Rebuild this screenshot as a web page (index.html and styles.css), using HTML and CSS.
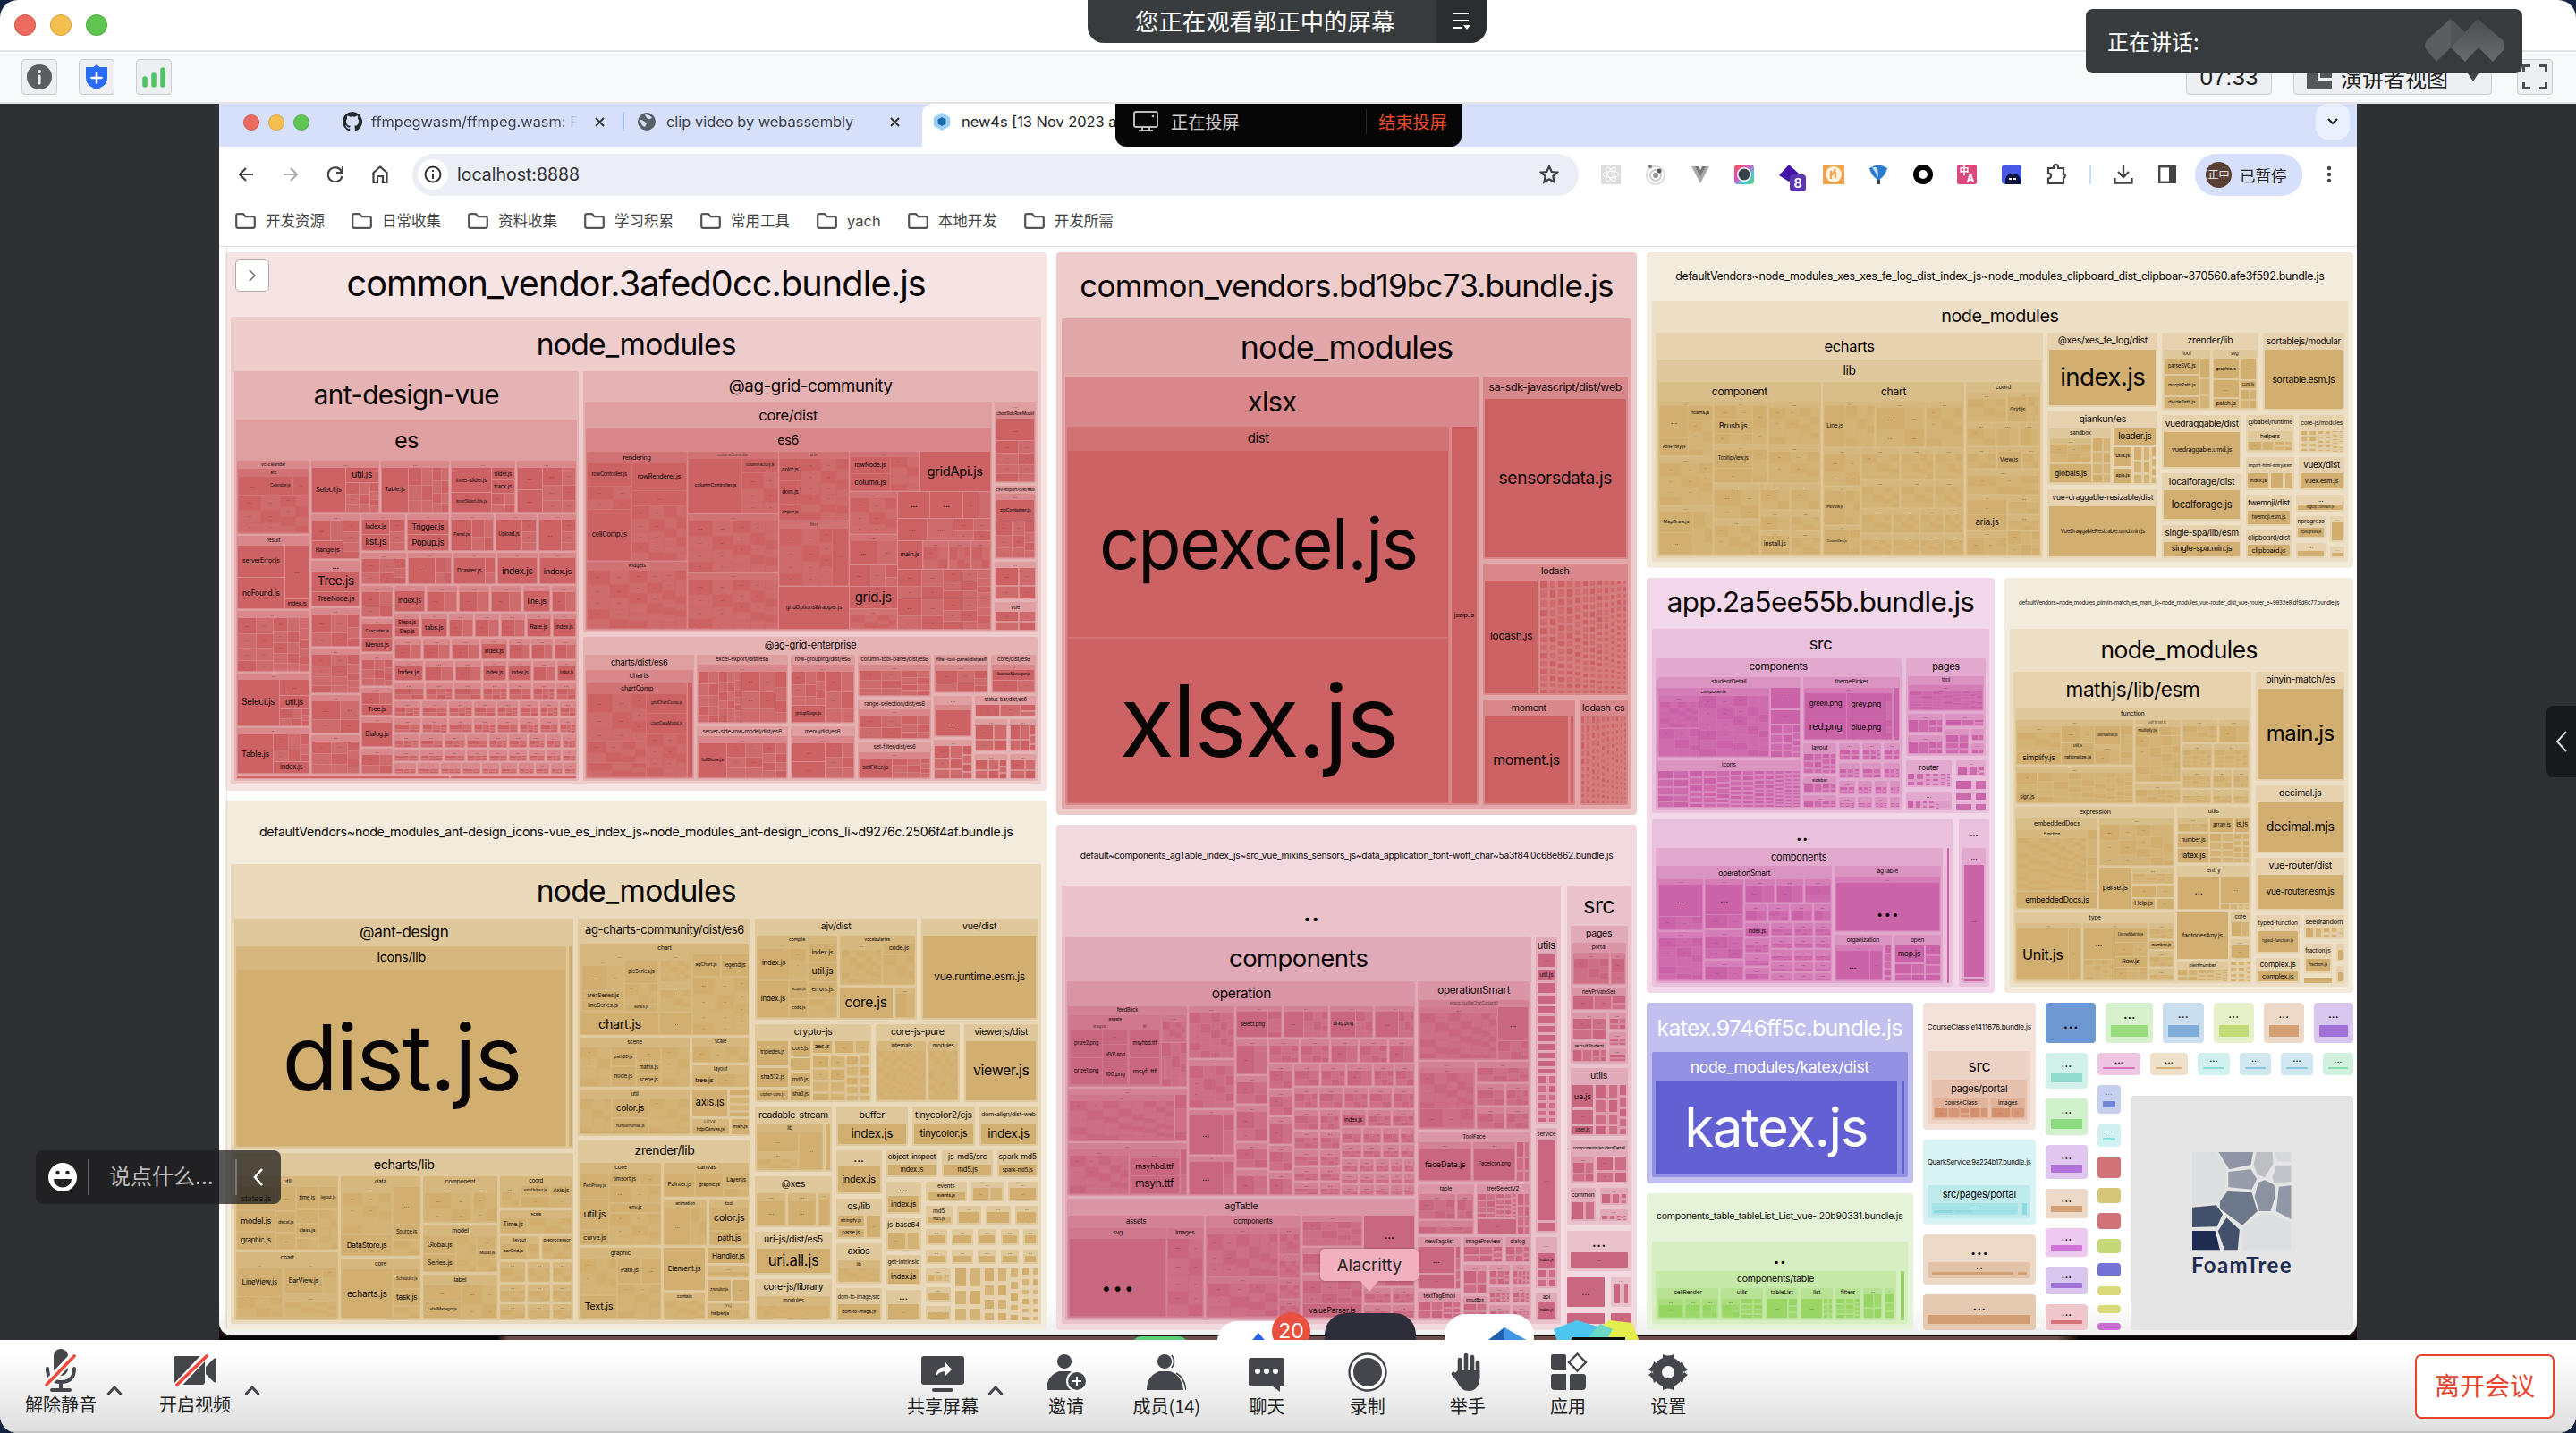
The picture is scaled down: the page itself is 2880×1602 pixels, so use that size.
FILE: index.html
```html
<!DOCTYPE html>
<html lang="zh-CN">
<head>
<meta charset="utf-8">
<title>Meeting</title>
<link rel="stylesheet" href="styles.css">
</head>
<body>
<div class="window">
  <header class="titlebar">
    <div class="lights"><i class="red"></i><i class="amber"></i><i class="green"></i></div>
    <div class="watching"><span>您正在观看郭正中的屏幕</span><b><svg width="24" height="22" viewBox="0 0 24 22"><path d="M2 2h18M2 10h18M2 18h10" stroke="#fff" stroke-width="2.2"/><path d="M14 15h8l-4 5z" fill="#fff"/></svg></b></div>
  </header>
  <div class="infobar">
    <div class="group">
      <span class="btn"><svg width="28" height="28" viewBox="0 0 28 28"><circle cx="14" cy="14" r="14" fill="#5c5d61"/><circle cx="14" cy="8" r="2.1" fill="#f0f0f3"/><path d="M14 13v8" stroke="#f0f0f3" stroke-width="3.2" stroke-linecap="round"/></svg></span>
      <span class="btn"><svg width="26" height="28" viewBox="0 0 26 28"><path d="M13 0l3.500 3H25v12c0 7-6 11-12 13C7 26 1 22 1 15V3h8.500z" fill="#2b6cf6"/><path d="M13 9.500v11M7.500 15h11" stroke="#fff" stroke-width="2.600" stroke-linecap="round"/></svg></span>
      <span class="btn"><svg width="28" height="24" viewBox="0 0 28 24"><path d="M4 14v7M14 10v11M24 4v17" stroke="#4fc465" stroke-width="5.500" stroke-linecap="round"/></svg></span>
    </div>
    <div class="group">
      <span class="btn time">07:33</span>
      <span class="btn view"><svg width="28" height="28" viewBox="0 0 28 28"><path d="M2 0h10v18h16v8q0 2-2 2H2q-2 0-2-2V2q0-2 2-2z" fill="#55565a"/><path d="M15 0h11q2 0 2 2v13H15z" fill="#55565a"/></svg>演讲者视图<svg class="tri" width="12" height="9"><path d="M0 0h12L6 9z" fill="#444"/></svg></span>
      <span class="btn"><svg width="28" height="28" viewBox="0 0 28 28"><path d="M1.500 8V1.500H9M19 1.500h7.500V8M26.500 20v6.500H19M9 26.500H1.500V20" fill="none" stroke="#4c4d51" stroke-width="3"/></svg></span>
    </div>
  </div>
  <main class="stage">
    <section class="screen">
      <div class="tabs">
        <div class="lights small"><i class="red"></i><i class="amber"></i><i class="green"></i></div>
        <div class="tab t1"><svg width="22" height="22" viewBox="0 0 16 16"><path fill="#23272e" d="M8 0a8 8 0 0 0-2.530 15.590c.4.070.550-.170.550-.380v-1.490c-2.010.370-2.530-.490-2.690-.940-.090-.230-.480-.940-.820-1.130-.280-.150-.680-.520-.010-.530.630-.010 1.080.580 1.230.820.720 1.210 1.870.870 2.330.660.070-.520.280-.870.510-1.070-1.780-.200-3.640-.890-3.640-3.950 0-.870.310-1.590.820-2.150-.080-.200-.360-1.020.080-2.120 0 0 .670-.210 2.200.820a7.600 7.600 0 0 1 4 0c1.530-1.040 2.200-.820 2.200-.820.440 1.100.160 1.920.080 2.120.510.560.820 1.270.820 2.150 0 3.070-1.870 3.750-3.650 3.950.290.250.540.730.540 1.480v2.200c0 .210.150.460.550.380A8 8 0 0 0 8 0z"/></svg><span>ffmpegwasm/ffmpeg.wasm: F</span><svg class="x" width="11" height="11" viewBox="0 0 11 11"><path d="M1 1l9 9M10 1l-9 9" stroke="#333" stroke-width="2"/></svg></div>
        <div class="tab t2"><svg width="20" height="20" viewBox="0 0 20 20"><circle cx="10" cy="10" r="10" fill="#5a6067"/><path d="M3 8c3 0 4 2 6 3s0 3-1 5c-3-1-5-4-5-8zM8 2c4 0 6 1 8 4-2 0-2 2-4 1S9 5 8 2z" fill="#d6e0fb"/></svg><span>clip video by webassembly</span><svg class="x" width="11" height="11" viewBox="0 0 11 11"><path d="M1 1l9 9M10 1l-9 9" stroke="#333" stroke-width="2"/></svg></div>
        <div class="tab t3"><svg width="18" height="20" viewBox="0 0 18 20"><path d="M9 0l9 5v10l-9 5-9-5V5z" fill="#9fd0f5"/><path d="M9 5l4.500 2.500v5L9 15l-4.500-2.500v-5z" fill="#1c6bb0"/></svg><span>new4s [13 Nov 2023 at</span></div>
        <div class="down"><svg width="12" height="8" viewBox="0 0 12 8"><path d="M1 1l5 5 5-5" fill="none" stroke="#222" stroke-width="2.200"/></svg></div>
      </div>
      <div class="casting"><svg width="28" height="24" viewBox="0 0 28 24"><rect x="1" y="1" width="26" height="17" rx="2" fill="none" stroke="#bbb" stroke-width="2"/><path d="M10 18v3M18 18v3M6 22h16" stroke="#bbb" stroke-width="2"/><circle cx="22" cy="6" r="1.300" fill="#bbb"/></svg><span>正在投屏</span><em>结束投屏</em></div>
      <div class="navbar">
        <svg width="18" height="16" viewBox="0 0 18 16"><path d="M17 8H2M9 1L2 8l7 7" fill="none" stroke="#444" stroke-width="2.200"/></svg>
        <svg width="18" height="16" viewBox="0 0 18 16"><path d="M1 8h15M9 1l7 7-7 7" fill="none" stroke="#aaa" stroke-width="2.200"/></svg>
        <svg width="18" height="18" viewBox="0 0 18 18"><path d="M16 6A8 8 0 1 0 16.500 11M17 0v7h-7" fill="none" stroke="#444" stroke-width="2.200"/></svg>
        <svg width="18" height="20" viewBox="0 0 18 20"><path d="M1.500 8L9 1.500 16.500 8v11H12v-7H6v7H1.500z" fill="none" stroke="#444" stroke-width="2.200"/></svg>
        <div class="url"><i><svg width="20" height="20" viewBox="0 0 20 20"><circle cx="10" cy="10" r="8.500" fill="none" stroke="#333" stroke-width="2"/><path d="M10 9v6M10 5v2" stroke="#333" stroke-width="2"/></svg></i><span>localhost:8888</span><svg width="22" height="22" viewBox="0 0 22 22"><path d="M11 2l2.700 6 6.300.700-4.700 4.300 1.300 6.500L11 16.200l-5.600 3.300 1.300-6.500L2 8.700 8.300 8z" fill="none" stroke="#3c4043" stroke-width="2.200"/></svg></div>
        <div class="ext">
          <svg viewBox="0 0 24 24"><rect x="1" y="1" width="22" height="22" rx="1" fill="#ddd"/><g fill="none" stroke="#fff"><ellipse cx="12" cy="12" rx="9" ry="3.500"/><ellipse cx="12" cy="12" rx="9" ry="3.500" transform="rotate(60 12 12)"/><ellipse cx="12" cy="12" rx="9" ry="3.500" transform="rotate(120 12 12)"/></g></svg>
          <svg viewBox="0 0 24 24"><circle cx="12" cy="13" r="10" fill="none" stroke="#ddd" stroke-width="2"/><circle cx="12" cy="13" r="6" fill="none" stroke="#ccc" stroke-width="2"/><circle cx="12" cy="13" r="3" fill="#999"/><circle cx="6" cy="3" r="2" fill="#777"/><circle cx="16" cy="8" r="2.500" fill="#555"/></svg>
          <svg viewBox="0 0 24 24"><path d="M2 3h6l4 8 4-8h6L12 22z" fill="#aaa"/><path d="M6 3h4l2 4 2-4h4l-6 11z" fill="#777"/></svg>
          <svg viewBox="0 0 24 24"><defs><linearGradient id="rb" x2="1" y2="1"><stop stop-color="#f2574a"/><stop offset=".4" stop-color="#e04fc0"/><stop offset=".7" stop-color="#45c9e8"/><stop offset="1" stop-color="#66cf5f"/></linearGradient></defs><rect x="1" y="1" width="22" height="22" rx="4" fill="url(#rb)"/><circle cx="12" cy="12" r="8" fill="#fff"/><circle cx="12" cy="12" r="6.500" fill="#35404c"/></svg>
          <svg viewBox="0 0 24 24" overflow="visible"><path d="M12 1l11 10-11 9L1 13z" fill="#4213a8"/><rect x="13" y="12" width="18" height="19" rx="4" fill="#5b36b0"/><text x="22" y="26.500" font-size="14" font-weight="700" fill="#fff" text-anchor="middle">8</text></svg>
          <svg viewBox="0 0 24 24"><rect x="0" y="1" width="24" height="22" fill="#f0a34d"/><circle cx="12" cy="12" r="9" fill="#fff3df"/><path d="M9 8v9M14 6l-4 7M14 9v7" stroke="#f0a34d" stroke-width="2.200" fill="none"/></svg>
          <svg viewBox="0 0 24 24"><path d="M2 5q10-7 20 0-2 8-8 12v6h-4v-6Q4 13 2 5z" fill="#2a7bd0"/><path d="M5 4l6 0 1 11z" fill="#bfe3fb"/><path d="M10 18h4v5h-4z" fill="#444"/></svg>
          <svg viewBox="0 0 24 24"><circle cx="12" cy="12" r="8" fill="none" stroke="#000" stroke-width="6"/></svg>
          <svg viewBox="0 0 24 24"><rect x="1" y="1" width="22" height="22" rx="2" fill="#d9497e"/><text x="9" y="12" font-size="11" font-weight="700" fill="#fff" text-anchor="middle">中</text><text x="16" y="21" font-size="12" font-weight="700" fill="#fff" text-anchor="middle">A</text></svg>
          <svg viewBox="0 0 24 24"><rect x="1" y="1" width="22" height="22" rx="4" fill="#4757e6"/><path d="M5 23V18q1-7 8-7 8 0 9 7v5z" fill="#0b1440"/><path d="M9 17h3M14 17h3" stroke="#fff" stroke-width="2"/></svg>
          <svg viewBox="0 0 24 24"><path d="M3 5h6V3.500a2.500 2.500 0 0 1 5 0V5h6v6a2.600 2.600 0 0 1 0 5v6H3v-5.500a3 3 0 0 0 0-6z" fill="none" stroke="#444" stroke-width="2.200"/></svg>
        </div>
        <u></u>
        <svg class="dl" width="22" height="22" viewBox="0 0 22 22"><path d="M11 0v13M5 8l6 6 6-6M1.500 15v5.500h19V15" fill="none" stroke="#444" stroke-width="2.300"/></svg>
        <svg class="sp" width="20" height="20" viewBox="0 0 20 20"><rect x="1.200" y="1.200" width="17.600" height="17.600" fill="none" stroke="#444" stroke-width="2.400"/><path d="M12 1h7v18h-7z" fill="#444"/></svg>
        <div class="profile"><i>正中</i>已暂停</div>
        <svg width="6" height="20" viewBox="0 0 6 20"><g fill="#444"><circle cx="3" cy="3" r="2.200"/><circle cx="3" cy="10" r="2.200"/><circle cx="3" cy="17" r="2.200"/></g></svg>
      </div>
      <div class="bookmarks" id="bookmarks"></div>
      <div class="page"><div class="toggle"><svg width="10" height="14" viewBox="0 0 10 14"><path d="M2 1l6 6-6 6" fill="none" stroke="#777" stroke-width="1.600"/></svg></div><div class="treemap" id="treemap"></div></div>
      <div class="tip">Alacritty</div>
      <div class="dock">
        <i class="d1"></i><i class="d2"><svg width="30" height="14" viewBox="0 0 30 14"><path d="M15 0l12 14H3z" fill="#2b62ea"/></svg></i><i class="d3"></i><i class="d4"><svg width="56" height="22" viewBox="0 0 56 22"><path d="M0 22L28 0 56 16v6z" fill="#4495e8"/><path d="M0 22L28 0v22z" fill="#2161ad"/></svg></i><i class="d5"><svg width="96" height="24" viewBox="0 0 96 24"><path d="M0 10L26 0 52 8v16H4z" fill="#4cc6ec"/><path d="M42 16L62 0 88 3l8 21H40z" fill="#e4ee4e"/><path d="M52 4l14 6-8 14H34z" fill="#6ad9c8"/><path d="M20 19h60v5H20z" fill="#081010"/></svg></i>
        <b>20</b>
      </div>
    </section>
    <div class="chat"><svg width="32" height="32" viewBox="0 0 32 32"><circle cx="16" cy="16" r="16" fill="#fff"/><circle cx="10.500" cy="11" r="2.300" fill="#222"/><circle cx="21.500" cy="11" r="2.300" fill="#222"/><path d="M6 18h20a10 9.500 0 0 1-20 0z" fill="#222"/></svg><span>说点什么...</span><svg class="back" width="12" height="20" viewBox="0 0 12 20"><path d="M10 1L2 10l8 9" fill="none" stroke="#fff" stroke-width="2.600"/></svg></div>
    <div class="drawer"><svg width="14" height="24" viewBox="0 0 14 24"><path d="M12 1L2 12l10 11" fill="none" stroke="#ddd" stroke-width="2"/></svg></div>
  </main>
  <footer class="controls">
    <div class="item mic"><svg width="44" height="48" viewBox="0 0 44 48"><rect x="14" y="0" width="16" height="30" rx="8" fill="#44464b"/><path d="M7 22q0 15 15 15t15-15M22 37v8M12 46h20" fill="none" stroke="#44464b" stroke-width="4" stroke-linecap="round"/><path d="M36 8L6 40" stroke="#fff" stroke-width="9"/><path d="M37 8L6 40" stroke="#f0483a" stroke-width="3.600" stroke-linecap="round"/></svg><span>解除静音</span></div>
    <svg class="up" width="18" height="11" viewBox="0 0 18 11"><path d="M1.500 10L9 2l7.500 8" fill="none" stroke="#44464b" stroke-width="3"/></svg>
    <div class="item cam"><svg width="50" height="48" viewBox="0 0 50 48"><rect x="1" y="8" width="35" height="32" rx="3" fill="#44464b"/><path d="M37 20l9-9q3-2 3 1v24q0 3-3 1l-9-9z" fill="#44464b"/><path d="M38 6L4 42" stroke="#fff" stroke-width="8"/><path d="M38 8L5 40" stroke="#f0483a" stroke-width="3.600" stroke-linecap="round"/></svg><span>开启视频</span></div>
    <svg class="up second" width="18" height="11" viewBox="0 0 18 11"><path d="M1.500 10L9 2l7.500 8" fill="none" stroke="#44464b" stroke-width="3"/></svg>
    <div class="item share"><svg width="50" height="44" viewBox="0 0 50 44"><rect x="1" y="2" width="48" height="32" rx="3" fill="#44464b"/><path d="M17 26q1-12 11-12v-5l7 8-7 7v-5q-8 0-11 7z" fill="#fff"/><path d="M15 40h20" stroke="#44464b" stroke-width="4" stroke-linecap="round"/></svg><span>共享屏幕</span></div>
    <svg class="up" width="18" height="11" viewBox="0 0 18 11"><path d="M1.500 10L9 2l7.500 8" fill="none" stroke="#44464b" stroke-width="3"/></svg>
    <nav>
      <div class="item"><svg viewBox="0 0 44 44"><circle cx="20" cy="10" r="8" fill="#44464b"/><path d="M0 42q0-16 14-21h12q12 4 14 21z" fill="#44464b"/><circle cx="34" cy="32" r="12" fill="#fff"/><circle cx="34" cy="32" r="10" fill="#44464b"/><path d="M34 27v10M29 32h10" stroke="#fff" stroke-width="2"/></svg><span>邀请</span></div>
      <div class="item"><svg viewBox="0 0 44 44"><circle cx="20" cy="10" r="8" fill="#44464b"/><path d="M0 42q0-16 14-21h12q13 4 15 21z" fill="#44464b"/><path d="M28 3q5 7 0 14M33 23q9 5 11 19" fill="none" stroke="#44464b" stroke-width="1.600"/></svg><span>成员(14)</span></div>
      <div class="item"><svg viewBox="0 0 44 44"><path d="M5 6h34q3 0 3 3v26q0 3-3 3h-2v6l-8-6H5q-3 0-3-3V9q0-3 3-3z" fill="#44464b"/><g fill="#fff"><circle cx="12" cy="21" r="3"/><circle cx="22" cy="21" r="3"/><circle cx="32" cy="21" r="3"/></g></svg><span>聊天</span></div>
      <div class="item"><svg viewBox="0 0 44 44"><circle cx="22" cy="22" r="20.500" fill="#fff" stroke="#44464b" stroke-width="2.400"/><circle cx="22" cy="22" r="16" fill="#44464b"/></svg><span>录制</span></div>
      <div class="item"><svg viewBox="0 0 44 44"><path d="M13 8v18M20 3v20M27 5v20M33 11v18M6 24l8 9" stroke="#44464b" stroke-width="4.600" stroke-linecap="round"/><path d="M11 20h24.300v10q-2 13-12 13-9 0-13-10l-5-8z" fill="#44464b"/></svg><span>举手</span></div>
      <div class="item"><svg viewBox="0 0 44 44"><g fill="#44464b"><path d="M5 2h13q2 0 2 2v16H7q-4 0-4-4V4q0-2 2-2zM5 24h15v18H7q-4 0-4-4V26q0-2 2-2zM26 24h13q3 0 3 3v11q0 4-4 4H24V26q0-2 2-2z"/></g><path d="M32.500 1.500L42 11l-9.500 9.500L23 11z" fill="none" stroke="#44464b" stroke-width="2.400"/></svg><span>应用</span></div>
      <div class="item"><svg viewBox="0 0 44 44"><circle cx="22" cy="22" r="12" fill="none" stroke="#44464b" stroke-width="10"/><path d="M16 6V2q6 3 12 0v4M16 38v4q6-3 12 0v-4M34 13l4-3q1 6 6 9l-4 3M10 31l-4 3q-1-6-6-9l4-3M34 31l4 3q1-6 6-9l-4-3M10 13l-4-3q-1 6-6 9l4 3" fill="#44464b"/></svg><span>设置</span></div>
    </nav>
    <button class="leave">离开会议</button>
  </footer>
  <div class="talking"><span>正在讲话:</span><svg width="90" height="48" viewBox="0 0 90 48"><defs><linearGradient id="lg" x2="0" y2="1"><stop stop-color="#4a4c50"/><stop offset="1" stop-color="#6a6b6e"/></linearGradient></defs><path d="M30 0L3 24q-4 6 0 11l11 13 16-16z" fill="#5b5d60"/><path d="M30 0l16 15-16 17z" fill="#515356"/><path d="M60 0L30 32l16 16 15-16 16 16 11-12q4-6 0-12z" fill="url(#lg)"/></svg></div>
</div>
<script src="treemap.js"></script>
</body>
</html>
```

FILE: styles.css
```css
* { box-sizing: border-box; }
html, body { margin: 0; height: 100%; background: #14233f; overflow: hidden; }
body { font-family: Inter, "Noto Sans CJK SC", sans-serif; color: #222; }
i, em { font-style: normal; }
svg { flex: none; display: block; }
.window { position: relative; width: 2880px; height: 1602px; display: flex; flex-direction: column; background: #fff; border-radius: 20px; overflow: hidden; }

.titlebar { height: 58px; border-bottom: 2px solid #e3e3e8; display: flex; align-items: flex-start; }
.lights { display: flex; gap: 16px; padding: 16px 0 0 16px; width: 1216px; }
.lights i { width: 24px; height: 24px; border-radius: 50%; border: 1px solid #0002; }
.red { background: #ec6a5e; } .amber { background: #f4bf4f; } .green { background: #61c554; }
.watching { height: 48px; width: 446px; display: flex; background: #383c3f; border-radius: 0 0 18px 18px; overflow: hidden; color: #fff; font: 26.400px/46px "Noto Sans CJK SC", sans-serif; }
.watching span { flex: 1; padding-left: 53px; white-space: nowrap; }
.watching b { width: 56px; background: #2c2d30; display: flex; align-items: center; justify-content: center; }

.infobar { height: 58px; background: #f8f9fb; border-bottom: 2px solid #e3e3e5; display: flex; align-items: center; justify-content: space-between; padding: 0 26px 0 24px; }
.group { display: flex; gap: 24px; }
.group:last-child { gap: 28px; }
.btn { height: 40px; min-width: 40px; border: 1.500px solid #ccccd1; border-radius: 4px; background: #eeeff2; display: flex; align-items: center; justify-content: center; font-size: 24px; }
.time { width: 96px; font: 26px "Liberation Sans", sans-serif; margin-right: -4px; }
.view { width: 222px; gap: 10px; }
.view .tri { margin-left: 12px; }

.stage { position: relative; height: 1382px; background: #2f3034; padding: 0 245px; }
.screen { position: relative; height: 1382px; width: 2390px; background: linear-gradient(90deg, #080606 13%, #6b4c46 13.500%, #6b4c46 86%, #0a0605 87%) bottom / 100% 4px no-repeat #17100f; overflow: hidden; display: flex; flex-direction: column; }
.tabs { height: 48px; background: #d6e0fb; display: flex; align-items: center; font-size: 16.400px; color: #3c4048; flex: none; }
.lights.small { padding: 0 0 7px 27px; gap: 10px; width: 138px; }
.lights.small i { width: 18px; height: 18px; }
.tab { display: flex; align-items: center; height: 44px; margin-bottom: 8px; white-space: nowrap; overflow: hidden; }
.t1 { width: 315px; padding-right: 20px; border-right: 2px solid #a9c2f5; height: 22px; }
.t1 span { margin-left: 10px; width: 231px; overflow: hidden; -webkit-mask: linear-gradient(90deg, #000 90%, transparent); mask: linear-gradient(90deg, #000 90%, transparent); }
.tab .x { margin-left: auto; }
.t2 { width: 333px; padding: 0 25px 0 15px; }
.t2 span { margin-left: 12px; }
.t3 { width: 330px; height: 48px; margin: 0; padding: 0 0 8px 13px; background: #fff; border-radius: 12px 12px 0 0; color: #222; }
.t3 span { margin-left: 13px; }
.down { margin: 0 8px 8px auto; width: 38px; height: 40px; border-radius: 14px; background: #e9f0fe; display: flex; align-items: center; justify-content: center; }
.casting { position: absolute; left: 1002px; top: 0; width: 387px; height: 48px; background: #060606; border-radius: 0 0 12px 12px; display: flex; align-items: center; color: #ccc; font: 19.200px "Noto Sans CJK SC", sans-serif; padding: 0 16px 9px 20px; }
.casting span { margin-left: 14px; }
.casting em { margin-left: auto; color: #ea4b2c; border-left: 1px solid #2a2a2a; padding-left: 13px; }

.navbar { height: 68px; background: #fff; display: flex; align-items: center; padding: 0 27px 6px 21px; flex: none; }
.navbar > svg { margin-right: 32px; }
.navbar > svg:last-child { margin: 0; }
.url { width: 1304px; height: 47px; margin-left: -5px; border-radius: 24px; background: #eceef6; display: flex; align-items: center; padding: 0 22px 0 6px; font-size: 19.500px; color: #333; }
.url i { width: 34px; height: 34px; border-radius: 50%; background: #fff; display: flex; align-items: center; justify-content: center; }
.url span { flex: 1; padding-left: 10px; }
.ext { display: flex; gap: 25.800px; margin: 0 25px 0 24px; }
.ext svg { width: 24px; height: 24px; }
.navbar u { width: 2px; height: 22px; background: #ccdcfb; margin-right: 25px; }
.navbar .dl { margin-right: 28px; }
.navbar .sp { margin-right: 21px; }
.profile { width: 120px; height: 47px; border-radius: 24px; background: #d6e0fb; display: flex; align-items: center; gap: 9px; padding-left: 12px; font-size: 17.500px; margin-right: 27px; white-space: nowrap; }
.profile i { width: 29px; height: 29px; border-radius: 50%; background: #5a3f35; color: #eee; font-size: 12px; line-height: 29px; text-align: center; }
.bookmarks { height: 44px; background: #fff; border-bottom: 1.500px solid #dde0e2; display: flex; gap: 30px; padding: 0 0 14px 18px; flex: none; font-size: 16.500px; color: #444; }
.bookmarks div { display: flex; align-items: center; gap: 11px; line-height: 20px; }

.page { position: relative; height: 1217px; background: linear-gradient(#fff 97%, #eee); border-radius: 0 0 14px 14px; padding: 6px 4px 6px 7px; flex: none; }
.page::before { content: ""; position: absolute; left: 8px; top: 0; bottom: 8px; width: 1px; background: #ccc8; }
.toggle { position: absolute; z-index: 2; left: 18px; top: 14px; width: 38px; height: 36px; border: 1.500px solid #aaa; border-radius: 5px; background: #fff; display: flex; align-items: center; justify-content: center; }
.treemap { height: 1205px; display: flex; letter-spacing: -.022em; }
.treemap div { min-width: 0; min-height: 0; flex-basis: 0; flex-shrink: 1; }
.row { display: flex; flex-direction: row; gap: inherit; }
.col { display: flex; flex-direction: column; gap: inherit; }
.plot { gap: 11px; flex: 1; }
.cell { display: flex; flex-direction: column; overflow: hidden; border-radius: 2px; background: color-mix(in srgb, var(--hue) var(--mix), #fff); color: #0b0606; }
.treemap .cell > .head { flex: none; display: flex; align-items: center; justify-content: center; white-space: nowrap; overflow: hidden; line-height: 1; }
.body { flex: 1; }
.s0 { --mix: 17%; } .s1 { --mix: 24%; } .s2 { --mix: 31%; } .s3 { --mix: 38%; } .s4 { --mix: 46%; }
.s5 { --mix: 53%; } .s6 { --mix: 59%; } .s7 { --mix: 66%; } .s8 { --mix: 72%; } .s9 { --mix: 79%; } .s10 { --mix: 85%; }
.field { background: color-mix(in srgb, var(--hue) calc(var(--mix) + 8%), #fff); }
.leaf { background: color-mix(in srgb, var(--hue) 95%, #fff); display: flex; align-items: center; justify-content: center; white-space: nowrap; overflow: hidden; line-height: 1; color: #0b0606; border-radius: 1px; }
.leaf.tiny { background: color-mix(in srgb, var(--hue) 90%, #fff); }
.leaf.tiny.alt { background: color-mix(in srgb, var(--hue) 96%, #fff); }
.faint span { opacity: .6; }
.k0 { padding: 0 6px 7px; gap: 7px; } .k1 { padding: 0 4px 4px; gap: 5px; } .k2 { padding: 0 2px 2px; gap: 3px; }
.k3 { padding: 0 1px 1px; gap: 2px; } .k4 { padding: 0 1px 1px; gap: 1px; }
.bundle { border-radius: 4px; }
.light, .light .leaf, .light .cell { color: #fff; }
.foam { margin-top: 12px; background: #e5e5e5; border-radius: 4px; display: flex; flex-direction: column; align-items: center; justify-content: center; padding-top: 2px; }
.foam p { margin: 5px 0 0; font: 700 24px/22px Lato, sans-serif; letter-spacing: 1.400px; color: #1f2c52; }

.tip { position: absolute; left: 1231px; top: 1280px; width: 110px; height: 36px; border-radius: 5px; background: #f0b0bf; font-size: 18.500px; line-height: 36px; text-align: center; box-shadow: 0 0 3px #0005; }
.tip::after { content: ""; position: absolute; left: 45px; top: 36px; border: 10px solid transparent; border-top: 12px solid #f0b0bf; border-bottom: 0; }
.dock i { position: absolute; overflow: hidden; display: flex; justify-content: center; }
.dock .d1 { left: 1021px; top: 1378px; width: 62px; height: 20px; border-radius: 14px; background: #5bd07a; }
.dock .d2 { left: 1116px; top: 1361px; width: 100px; height: 60px; border-radius: 22px; background: #fff; padding-top: 13px; padding-right: 8px; }
.dock .d3 { left: 1236px; top: 1352px; width: 102px; height: 60px; border-radius: 24px; background: #2d2e3a; }
.dock .d4 { left: 1370px; top: 1353px; width: 100px; height: 60px; border-radius: 24px; background: #fff; padding: 15px 0 0 34px; }
.dock .d5 { left: 1492px; top: 1360px; }
.dock b { position: absolute; left: 1177px; top: 1351px; width: 43px; height: 43px; border-radius: 50%; background: #e8503f; color: #fff; font: 23px/43px Inter, sans-serif; text-align: center; }

.chat { position: absolute; left: 40px; top: 1170px; width: 274px; height: 60px; border-radius: 8px; background: rgba(28, 28, 30, .74); display: flex; align-items: center; padding-left: 14px; color: #bbb; font-size: 24px; }
.chat span { margin-left: 12px; padding: 0 0 0 22px; border-left: 2px solid #666; width: 165px; line-height: 40px; white-space: nowrap; }
.chat .back { border-left: 2px solid #777; box-sizing: content-box; padding: 10px 0 10px 18px; }
.drawer { position: absolute; right: 0; top: 673px; width: 33px; height: 80px; border-radius: 8px 0 0 8px; background: #17181a; display: flex; align-items: center; justify-content: center; }

.controls { height: 104px; background: linear-gradient(#fff 15%, #dfdfdf); border-bottom: 2px solid #c4c4c4; display: flex; align-items: flex-start; padding: 0 24px 0 28px; }
.item { display: flex; flex-direction: column; align-items: center; font: 20px/28px "Noto Sans CJK SC", sans-serif; color: #222; white-space: nowrap; height: 92px; padding-top: 10px; width: 80px; }
.item span { margin-top: auto; margin-bottom: 6px; }
.up { margin: 51px 0 0 11px; }
.cam { margin-left: 41px; }
.second { margin-left: 15px; }
.share { margin-left: 723px; padding-top: 16px; }
.share + .up { margin-left: 10px; }
nav { display: flex; margin-left: 14px; }
nav .item { width: 112.200px; padding-top: 14px; }
nav .item span { margin-bottom: 4px; }
nav .item svg { width: 44px; height: 44px; }
.leave { margin: 16px 0 0 auto; width: 156px; height: 72px; border: 2px solid #e8442e; border-radius: 7px; background: #fff; color: #e8442e; font: 28px "Noto Sans CJK SC", sans-serif; padding: 0 0 4px; }
.talking { position: absolute; left: 2332px; top: 10px; width: 488px; height: 72px; border-radius: 8px; background: #383b3e; color: #fff; display: flex; align-items: center; justify-content: space-between; padding: 0 20px 2px 24px; font: 24px "Noto Sans CJK SC", sans-serif; }
```

FILE: treemap.js
```js
/* Outline notation, one level of indentation per level of nesting.
   b w head start step hue label   bundle (start/step choose the tint per depth)
   g w head label                  group, children side by side
   G w head label                  group, children stacked
   r w / c w                       plain row or column
   l w label [@size]               file
   f w cols rows                   field of small files
   m w cols rows                   small unnamed group
   n w rows cols grow a d          grid of small groups
   "|" separates siblings, ">" goes one level down on the same line. */
const OUTLINE = `
r 1
 c 918
  b 599 72 0 2 #c95a5c common_vendor.3afed0cc.bundle.js > g 1 61 node_modules
   g 644 54 ant-design-vue > G 1 46 es
    r 888
     c 136
      g 208 9 vc-calendar > G 1 9 src
       r 50 > l 55 | l 50 Calendar.js | l 28
       f 105 4 3
      g 208 11 result
       c 88 > l 90 serverError.js | l 85 noFound.js
       c 45 > l 150 | l 26 index.js
      g 172 8 > f 1 5 4
      g 150 7
       l 78 Select.js
       c 56 > l 50 | l 40 util.js | f 50 3 2
      g 130 7
       l 66 Table.js
       c 66 > f 80 3 2 | l 30 index.js
     c 494
      r 147
       g 125 8
        l 60 Select.js
        c 60 > l 30 util.js | f 60 3 3
       g 127 8 > l 50 Table.js | f 75 4 3
       g 118 8
        c 70 > l 65 inner-slider.js | l 50 innerSliderUtils.js
        c 40 > l 30 slider.js | l 30 track.js | f 45 2 2
       g 110 8
        c 45 > l 60 | l 60
        f 60 2 3
      r 736
       c 90
        g 130 7
         c 60 > f 60 2 1 | l 50 Range.js
         f 30 1 4
        G 133 12 > l 50 Tree.js | l 35 TreeNode.js
        m 112 3 2 | m 130 3 4 | m 110 2 2 | m 112 3 3
       c 400
        r 104
         g 82 6
          c 52 > l 1 Index.js | l 1 list.js
          f 28 1 3
         G 78 6 > l 1 Trigger.js | l 1 Popup.js
         g 80 6 > l 40 Panel.js | f 40 2 2
         g 78 6 > l 50 Upload.js | f 26 1 3
         g 70 6 > l 40 | f 25 1 3
        r 90
         m 82 3 2
         g 82 6 > l 50 | f 28 2 2
         g 78 6 > l 60 Drawer.js | f 18 1 2
         g 75 6 > l 1 index.js
         g 68 6 > l 1 index.js
        r 531
         c 58
          m 88 2 2
          G 95 6 > l 1 Cascader.js | l 1 Menus.js
          m 90 3 3
          G 80 6 > f 30 2 1 | l 26 Tree.js
          g 85 6 > l 1 Dialog.js
          m 70 2 2
         c 340
          r 75
           g 58 6 > l 1 index.js
           m 58 2 1 | m 58 2 1 | m 58 2 1
           g 50 6 > l 1 line.js
           m 46 2 1
          r 70
           G 46 6 > l 1 Steps.js | l 1 Step.js
           g 46 6 > l 1 tabs.js
           m 44 2 1 | m 44 2 1 | m 44 2 1
           g 44 6 > l 1 Rate.js
           g 42 6 > l 1 index.js
          r 60
           m 46 2 1 | m 46 2 1 | m 46 2 1
           g 44 6 > l 1 index.js
           m 36 2 1 | m 36 2 1 | m 36 2 1
          r 58
           g 46 6 > l 1 Index.js
           m 46 2 1 | m 42 2 1
           g 38 6 > l 1 index.js
           g 38 6 > l 1 index.js
           m 36 2 1
           g 30 6 > l 1 index.js
          n 268 6 7 .5 2 2
    r 7 > l 400 | l 235
   c 851
    g 735 34 @ag-grid-community
     g 758 30 core/dist > g 1 26 es6
      c 188
       g 310 13 rendering
        c 80 > l 60 rowController.js | f 60 2 2 | l 135 cellComp.js
        c 100 > l 75 rowRenderer.js | l 40 | f 150 4 5
       g 190 10 widgets > f 1 6 5
      c 168
       g 175 8 columnController
        l 98 columnController.js
        c 64 > l 38 columnFactory.js | f 115 2 3
       m 165 5 4 | m 158 5 4
      c 130
       g 192 8 utils
        c 40 > l 1 color.js | l 1 dom.js | l .7 object.js
        f 90 3 6
       g 180 8 filter > f 100 3 4 | l 28
       l 118 gridOptionsWrapper.js
      c 262
       r 112
        g 130 6
         c 75 > l 1 rowNode.js | l 1 column.js
         f 52 2 4
        l 130 gridApi.js
       r 388
        c 88
         m 120 3 3 | m 82 2 1 | f 60 3 1 | l 60 grid.js | m 55 4 2
        c 170
         r 75 > l 60 | l 60 | f 50 2 1
         f 60 4 1
         r 80 > l 45 main.js | n 125 1 3 0 2 2
         f 80 5 2 | f 85 5 2
     c 78
      g 230 10 > G 1 9 clientSideRowModel > l 60 | f 110 2 4
      g 208 9 csv-export/dist/es6 > G 1 7 > l 50 zipContainer.js | f 90 3 3
      m 105 2 2
      g 80 11 vue > f 1 2 2
    g 405 20 @ag-grid-enterprise
     g 203 17 charts/dist/es6 > g 1 14 charts
      g 190 13 chartComp
       c 112 > f 140 3 3 | f 60 4 2 | f 40 3 2
       c 76 > l 50 gridChartComp.js | l 50 chartDataModel.js | f 110 3 4
      l 7
     c 170
      g 200 11 excel-export/dist/es6 > g 1 8 > f 75 5 5 | f 80 3 3
      g 150 11 server-side-row-model/dist/es6 > g 1 8 > l 50 fullStore.js | f 105 4 3
     c 120
      g 200 11 row-grouping/dist/es6 > g 1 8
       c 60 > f 90 3 3 | l 45 groupStage.js
       f 52 2 3
      g 150 11 menu/dist/es6 > g 1 8
       c 60 > l 60 | l 50
       f 50 2 3
     c 138
      g 120 11 column-tool-panel/dist/es6 > m 1 4 3
      g 115 11 range-selection/dist/es6 > m 1 4 2
      g 105 11 set-filter/dist/es6 > g 1 7 > l 60 setFilter.js | f 70 3 3
     c 190
      r 110
       g 100 11 filter-tool-panel/dist/es6 > m 1 3 2
       g 82 11 core/dist/es6 > G 1 6 > l 1 licenseManager.js | f 1 2 1
      r 235
       c 70
        g 115 10 > g 1 6 > l 1
        m 110 3 3
       c 112
        g 60 10 status-bar/dist/es6 > f 1 3 1
        n 170 2 2 0 2 2
  b 590 71 1 3 #cfab68 defaultVendors~node_modules_ant-design_icons-vue_es_index_js~node_modules_ant-design_icons_li~d9276c.2506f4af.bundle.js > g 1 61 node_modules
   c 633
    g 650 31 @ant-design
     g 620 26 icons/lib > l 1 dist.js @102
     l 5
    g 472 26 echarts/lib
     c 190
      g 210 12 util
       c 72 > l 70 states.js | l 60 model.js | l 50 graphic.js
       c 35 > l 70 | l 60 decal.js | l 45
       c 38 > l 66 time.js | l 40 | l 40 class.js | f 30 2 1
       c 35 > l 60 layout.js | f 110 2 5
      g 190 12 chart
       G 85 6 > l 85 LineView.js | f 60 3 2
       c 100
        g 95 6 > l 70 BarView.js | f 25 1 3
        m 70 4 3
     c 148
      g 228 12 data
       c 92 > m 135 3 4 | l 60 DataStore.js
       c 48 > l 110 | l 40 Source.js | f 45 2 2
      g 170 12 core
       l 94 echarts.js
       c 48 > l 60 Scheduler.js | l 50 task.js | f 35 2 2
     c 138
      g 133 12 component > m 90 2 2 | m 45 2 2
      g 133 12 model
       c 58 > l 1 Global.js | l 1 Series.js
       f 34 2 5
       c 34 > l 50 | l 30 Model.js | f 50 2 2
      g 125 12 label
       c 70 > l 45 | l 45 LabelManager.js
       f 65 2 2
     c 134
      g 93 11 coord
       m 35 2 2
       c 95
        r 1 > l 50 axisHelper.js | l 35 Axis.js
        f 1 2 1
      g 70 9 scale > l 45 Time.js | f 80 3 2
      r 70
       g 68 9 layout > l 45 barGrid.js | f 20 1 2
       g 52 9 preprocessor > f 80 3 2
      n 170 3 3 0 2 2
   c 322
    G 615 28 ag-charts-community/dist/es6
     g 263 12 chart
      c 147
       g 165 7
        G 80 6 > f 70 2 1 | l 26 areaSeries.js | l 26 lineSeries.js
        c 62 > l 70 pieSeries.js | f 60 3 2 | l 20 series.js
       l 58 chart.js
      c 58 > m 80 4 4 | m 78 3 3 | l 58
      c 105
       r 60 > l 1 agChart.js | l 1 legend.js
       f 155 3 4
     r 140
      g 207 11 scene
       f 55 2 4
       c 45 > l 1 path2D.js | l 1 node.js
       c 45 > l 30 | l 25 matrix.js | l 25 scene.js
       f 50 2 4
      c 108
       g 70 10 scale > f 1 4 1
       g 58 10 layout > l 44 tree.js | f 60 2 1
     r 128
      g 207 11 util
       f 58 3 4
       c 68 > l 52 color.js | l 40 numberFormat.js
       f 75 3 4
      c 108
       r 80 > l 68 axis.js | f 36 1 4
       r 45
        g 70 8 canvas > l 1 hdpiCanvas.js
        l 34 main.js
    G 510 25 zrender/lib
     r 235
      g 153 12 core
       c 52 > l 75 PathProxy.js | l 82 util.js | l 40 curve.js
       c 95
        r 35 > l 50 timsort.js | l 35
        f 50 3 1 | l 24 env.js | f 95 3 3
      c 160
       g 95 12 canvas
        l 55 Painter.js | l 50 graphic.js
        c 45 > l 40 Layer.js | f 20 2 1
       r 125
        g 80 9 animation > l 50 | f 28 2 3
        G 75 9 tool > l 60 color.js | l 35 path.js
     r 200
      g 153 12 graphic
       c 68 > f 100 3 3 | l 62 Text.js
       c 80
        r 70 > l 45 Path.js | l 35
        f 95 3 4
      c 78
       l 122 Element.js
       g 75 9 contain > f 1 4 3
      c 78
       l 45 Handler.js | m 32 1 1
       r 60 > l 50 zrender.js | l 35
       g 45 7 svg > l 45 helper.js | f 30 2 2
   c 527
    r 287
     g 300 19 ajv/dist
      g 150 9 compile
       c 95
        g 1 6 > l 60 index.js | f 34 1 3
        r 1
         l 60 index.js
         c 34 > l 1 scope.js | l 1 code.js
       c 52 > l 1 index.js | l 1 util.js | l .8 errors.js | f 1 2 3
      c 142
       g 143 9 vocabularies
        m 80 6 5
        c 58 > l 30 code.js | f 90 3 3
       r 85 > l 100 core.js | m 38 2 1
     g 217 19 vue/dist > l 1 vue.runtime.esm.js
    r 222
     g 215 19 crypto-js
      c 60 > l 75 tripledes.js | l 60 sha512.js | l 34 cipher-core.js
      c 38 > l 45 core.js | l 36 | l 44 md5.js | l 36 sha3.js
      c 110
       r 35 > l 38 aes.js | f 70 2 1
       f 130 4 4
     g 157 19 core-js-pure
      g 90 11 internals > f 1 9 10
      g 54 11 modules > f 1 6 8
     g 137 19 viewerjs/dist > l 1 viewer.js
    r 605
     c 142
      g 180 19 readable-stream
       g 125 10 lib
        c 75 > l 50 | m 45 4 2
        l 42
       l 8
      g 142 19 @xes
       g 50 9 > l 1
       g 50 9 > l 1
       m 20 1 1
      g 118 19 uri-js/dist/es5 > l 1 uri.all.js
      g 115 19 core-js/library > g 1 11 modules > f 1 14 3
     c 377
      r 110
       g 135 19 buffer > l 1 index.js
       g 117 19 tinycolor2/cjs > l 1 tinycolor.js
       g 110 19 dom-align/dist-web > l 1 index.js
      r 485
       c 85
        g 122 18 > l 1 index.js
        g 112 19 qs/lib
         c 50 > l 1 stringify.js | l .8 parse.js
         l 25
        g 112 19 axios > g 1 9 lib > f 1 5 3
        g 88 18 dom-to-image/src > l 1 dom-to-image.js
       c 282
        r 78
         g 95 16 object-inspect > l 1 index.js
         g 93 16 js-md5/src > l 1 md5.js
         g 75 16 spark-md5 > l 1 spark-md5.js
        r 400
         c 65
          g 90 16 > l 1 index.js
          g 90 16 js-base64 > f 1 2 1
          g 85 16 get-intrinsic > l 1 index.js
          g 85 16 > l 1
         c 210
          r 62
           g 80 12 events > l 1 events.js
           m 62 2 1 | m 58 1 1
          r 58
           g 52 12 md5 > l 1 md5.js
           m 48 1 1 | m 48 1 1 | m 44 1 1
          r 50 > m 1 1 1 | m 1 1 1 | m .9 1 1 | m .8 1 1 | m .7 1 1
          r 45 > m 1 1 1 | m 1 1 1 | m .9 1 1 | m .8 1 1 | m .7 1 1
          r 160
           c 45 > m 1 3 1 | m 1 1 1 | m 1 1 1
           c 150
            f 1 7 3
 c 648
  b 629 74 2 3 #c95a5c common_vendors.bd19bc73.bundle.js > g 1 65 node_modules
   g 1064 56 xlsx
    G 980 27 dist > l 500 cpexcel.js @79 | l 442 xlsx.js @112
    l 64 jszip.js
   c 373
    g 490 25 sa-sdk-javascript/dist/web > l 1 sensorsdata.js
    g 355 19 lodash > l 138 lodash.js | f 222 12 14
    r 283
     g 238 19 moment > l 218 moment.js | l 6
     g 125 19 lodash-es > f 1 10 12
  b 565 68 1 2 #c75f79 default~components_agTable_index_js~src_vue_mixins_sensors_js~data_application_font-woff_char~5a3f84.0c68e862.bundle.js
   g 1283 57 ..
    g 1200 50 components
     c 898
      g 615 28 operation
       c 302
        g 228 10 feedBack
         g 233 9 assets
          g 150 8 images
           c 75 > l 1 prize2.png | l 1 prize1.png
           c 60 > l 30 | l 45 MVP.png | l 45 100.png
          G 80 8 ttf > l 1 msyhbd.ttf | l 1 msyh.ttf
         c 60 > m 70 4 3 | f 110 3 4
        g 150 7
         g 270 7 > f 1 8 5
         f 26 1 4
        g 145 7
         m 155 5 4
         G 130 10 > l 1 msyhbd.ttf | l 1 msyh.ttf
         f 14 1 2
       c 118
        m 145 5 5 | m 135 4 4
        g 125 6 > l 90 | f 28 1 3
        g 108 6 > l 90 | f 28 1 3
       c 455
        r 90
         g 114 6 > l 78 select.png | f 30 1 4
         g 114 6 > l 50 | f 60 3 3
         g 110 6 > l 62 drag.png | f 40 2 3
         g 100 6 > l 60 | f 38 3 3
        r 450
         c 80 > m 100 2 1 | m 78 2 2 | m 100 2 2 | m 70 2 2 | m 70 2 1
         c 372
          r 68 > m 75 3 2 | m 75 3 2 | m 70 2 1 | m 70 3 2 | m 66 2 1
          r 380
           c 60 > m 1 2 2 | m 1 2 2 | m 1.1 2 1 | m 1 2 2 | m .9 2 1
           c 305
            r 64 > m 1 2 2 | m 1 3 2 | m 1 2 1 | m .8 3 2 | m .8 2 2
            r 60 > m 1 3 2 | m 1 2 2 | m 1 3 2 | m 1 2 2 | m .9 3 2
            r 246
             n 113 5 2 0 2 2
             c 185
              r 46
               g 60 5 > l 1 index.js
               m 58 3 2 | m 55 3 2
              n 190 5 4 .3 2 2
      g 345 19 agTable
       g 350 14 assets
        g 250 12 svg > l 1 ... @44
        g 93 12 images > f 1 2 5
       g 244 14 components
        c 188 > m 140 6 3 | m 115 4 3
        n 54 4 1 0 3 3
       c 155
        m 85 4 3 | m 70 3 2
        G 120 7 > f 70 4 2 | l 38 valueParser.js
       c 130 > l 120 | m 90 3 2 | n 90 2 2 0 3 2
     c 288
      G 400 21 operationSmart
       g 185 8 enterpriseWeChatContent2
        g 200 7 > f 1 7 6
        c 76 > l 105 | f 56 3 2
       r 205
        g 145 7 > G 1 6 > f 110 5 4 | f 55 3 1
        c 135
         m 65 4 2
         r 68 > m 1 2 2 | m .8 3 2
         r 68 > m 1 2 2 | m .8 3 2
      g 132 11 ToolFace
       g 135 7 > l 1 faceData.js
       g 107 7 > l 1 FaceIcon.png
       f 30 2 3
      r 135
       G 143 11 table
        r 1 > m 90 3 2 | m 40 2 2
        m .5 4 1
       g 137 11 treeSelectV2
        c 103 > f 60 5 4 | l 35
        f 28 2 4
      r 220
       c 110
        g 140 11 newTagslist
         c 95 > l 70 | l 35
         f 10 1 4
        g 72 11 textTagEmoji > f 1 4 2
       c 172
        r 70
         g 105 11 imagePreview > f 1 3 2
         g 65 11 dialog > f 1 3 2
        r 145
         c 60
          m 75 2 2
          g 60 9 inputBox > f 1 2 2
         n 105 3 2 0 3 2
    c 54
     G 535 20 utils > l 36 | l 32 util.js | l 28 | l 22 | l 21 | l 20 | l 19 | l 18 | l 17 | l 16 | l 15 | l 14 | f 130 2 6
     G 300 14 service > l 220 | l 22
     G 145 18 > l 40 index.js | f 45 2 2
     g 80 11 api > l 1 index.js
   c 166
    G 975 45 src
     G 395 19 pages
      g 125 11 portal > m 90 3 3 | m 36 1 2
      g 65 10 newPrivateSea > f 1 3 1
      r 145
       c 85
        m 75 2 2
        g 55 9 recruitStudent > f 1 4 1
       c 42 > m 1 2 2 | m .8 2 2 | m .8 1 2
     g 195 19 utils
      c 55 > l 65 ua.js | l 38 | l 22 user.js
      f 78 3 4
     g 125 18 components/studentDetail > m 58 2 2 | f 75 2 2
     r 95
      g 68 16 common > f 1 2 1
      n 75 2 1 0 3 1
    g 115 24 > l 1
    r 85 > l 98 | m 52 2 1
    r 30 > l 98 | l 52
 c 790
  b 352 54 1 2 #cfab68 defaultVendors~node_modules_xes_xes_fe_log_dist_index_js~node_modules_clipboard_dist_clipboar~370560.afe3f592.bundle.js > g 1 36 node_modules
   g 830 30 echarts > g 1 25 lib
    g 345 22 component
     c 113
      g 170 5
       c 60 > l 90 | l 50 AxisProxy.js
       c 48 > l 40 roams.js | f 95 2 4
      m 150 3 4
      g 148 6
       c 70 > l 1 MapDraw.js | l 1
       f 40 2 3
     c 225
      r 140
       g 113 5
        c 80 > f 1 2 1 | l 1 Brush.js | f .8 3 1
        f 30 1 2
       m 108 4 4
      r 122
       g 113 5
        c 80 > l 1 TooltipView.js | l .7
        f 30 1 4
       m 108 3 3
      r 230
       c 95 > m 110 2 2 | m 110 4 3
       c 125
        r 80 > m 1 2 2 | m 1 2 2
        r 60 > m 1 2 1 | m 1 3 2
        r 70
         g 60 5 > l 1 install.js
         m 60 3 2
    G 298 22 chart
     r 150
      g 108 5 > l 44 Line.js | f 60 3 4
      m 105 2 2 | m 80 3 4
     r 350
      c 78
       m 120 2 2
       g 120 5 > l 45 PieView.js | f 30 2 4
       g 90 5 > l 55 CustomView.js | f 22 1 4
      n 218 4 3 .4 3 3
    G 158 12 coord
     r 95
      m 85 3 3
      g 70 5 > l 45 Grid.js | f 25 2 3
     r 75 > m 1 2 2 | m .8 2 1 | m .7 2 1
     r 70
      m 60 3 2
      g 50 5 > l 1 View.js
      m 36 2 2
     m 80 3 2
     r 110
      G 85 5 > l 1 | l 1 aria.js
      n 65 2 1 0 2 2
     r 75 > m 85 3 1 | f 65 3 2
   c 235
    g 250 19 @xes/xes_fe_log/dist > l 1 index.js
    g 248 19 qiankun/es
     g 133 11 sandbox
      c 88 > m 75 3 2 | l 58 globals.js
      f 38 2 4
     c 90
      l 55 loader.js
      r 125
       c 38 > l 1 utils.js | l .8 apis.js
       f 48 3 3
    g 230 19 vue-draggable-resizable/dist > l 1 VueDraggableResizable.umd.min.js
   c 390
    r 262
     g 205 19 zrender/lib
      g 98 10 tool
       c 75 > l 50 parseSVG.js | l 65 morphPath.js | l 36 dividePath.js
       f 18 1 3
      g 94 10 svg
       c 56 > l 70 graphic.js | l 60 | l 30 patch.js
       c 34 > l 70 | l 25 core.js | f 60 2 2
     g 174 19 sortablejs/modular > l 1 sortable.esm.js
    r 482
     c 170
      g 185 19 vuedraggable/dist > l 1 vuedraggable.umd.js
      g 160 19 localforage/dist > l 1 localforage.js
      g 112 19 single-spa/lib/esm > l 1 single-spa.min.js
     c 210
      r 130
       g 104 18 @babel/runtime > g 1 12 helpers > f 1 4 1
       g 98 18 core-js/modules > f 1 6 4
      r 112
       g 104 18 import-html-entry/esm > l 48 index.js | f 50 2 1
       g 98 18 vuex/dist > l 1 vuex.esm.js
      r 215
       c 98
        g 105 18 twemoji/dist > l 1 twemoji.esm.js
        g 90 16 clipboard/dist > l 1 clipboard.js
       c 104
        g 58 11 > l 1 regexp.common.js
        r 145
         c 62
          g 75 13 nprogress > l 1 nprogress.js
          g 52 9 > l 1
         c 30 > m 95 1 1 | m 40 1 1
  r 464
   b 389 57 1 2 #c85ba3 app.2a5ee55b.bundle.js > c 1
    g 618 33 src
     g 528 21 components
      c 306
       g 270 12 studentDetail
        g 235 9 components
         c 85 > m 110 5 5 | f 90 3 3
         f 147 5 6
        c 62 > l 75 | l 48 | f 110 3 4
       g 160 12 icons > f 1 12 5
      c 205
       g 210 12 themePicker
        g 190 6
         c 90 > l 1 green.png | l 1 red.png
         c 83 > l 1 grey.png | l 1 blue.png
         f 12 1 6
        l 10
       r 215
        c 70
         g 105 12 layout > f 1 4 3
         g 55 9 sidebar > f 1 4 1
         m 42 4 1
        n 130 4 3 .3 2 2
     c 172
      G 340 20 pages
       g 120 10 tool > g 1 7 > f 1 8 5
       r 140
        c 76 > m 1 4 1 | m 1 4 1
        c 82
         m 45 3 1
         r 85
          m 50 2 3
          c 28 > m 1 2 1 | m 1 2 1
      r 170
       c 100
        g 92 15 router > f 1 6 2
        g 62 10 > f 1 7 1
       c 64 > m 55 3 1 | f 100 2 3
    r 560
     g 640 32 ..
      g 615 20 components
       g 375 15 operationSmart
        c 98
         G 170 6 > l 110 | f 45 3 1
         m 165 3 5
        c 82
         G 165 6 > l 110 | f 45 2 1
         m 95 2 2 | m 68 2 1
        c 185
         r 82 > m 64 2 1 | m 58 2 1 | m 55 1 2
         r 60 > m 1 2 1 | m 1 2 2 | m 1 2 1 | m .8 2 1
         r 205
          c 52
           g 48 5 > l 1 index.js
           m 50 3 2 | m 40 2 2 | m 45 2 1
          n 132 5 3 0 2 2
       c 228
        g 225 12 agTable > g 1 7 > l 1 ... @30
        r 160
         g 120 12 organization
          g 100 6 > l 72 | l 26
          f 12 1 5
         g 98 12 open
          c 60 > l 70 map.js | f 65 2 2
          f 30 1 4
      l 4
     g 66 32 > G 1 19 > l 350 | l 8
   b 389 57 1 2 #cfab68 defaultVendors~node_modules_pinyin-match_es_main_js~node_modules_vue-router_dist_vue-router_e~9932e8.df9d6c77.bundle.js > g 1 48 node_modules
    G 508 41 mathjs/lib/esm
     g 320 13 function
      c 248
       g 152 7
        c 95 > m 85 3 3 | l 40 simplify.js
        c 72 > f 60 2 1 | l 25 util.js | l 50 rationalize.js
        c 55 > l 60 derivative.js | m 60 2 1
        f 24 1 5
       g 122 7
        c 42 > f 60 1 2 | l 25 sign.js
        f 200 8 4
      c 98
       G 210 8 arithmetic
        r 30 > l 52 multiply.js | f 45 2 1
        f 160 4 5
       m 66 5 2
      c 142
       r 78 > m 75 3 3 | m 66 2 1
       r 82 > m 62 4 4 | m 75 4 4
       r 112 > n 62 2 1 0 4 3 | n 78 2 2 0 2 2
     r 345
      g 338 13 expression
       G 173 13 embeddedDocs
        r 235
         g 150 9 function > f 1 8 12
         f 20 1 8
        l 60 embeddedDocs.js
       c 157
        m 160 5 3
        r 135
         l 65 parse.js
         c 86
          m 55 4 3 | f 40 2 1
          r 35 > l 46 Help.js | l 36
      c 155
       g 205 12 utils
        c 65 > m 55 3 1 | l 50 number.js | l 50 latex.js
        c 82
         r 50 > l 48 array.js | l 30 is.js
         f 100 4 4
       g 160 12 entry
        l 90
        c 60 > l 105 | f 18 4 1
     r 232
      g 338 12 type
       g 138 6 > l 112 Unit.js | l 24
       g 138 6
        c 65 > l 100 | f 65 4 4
        c 68 > l 50 DenseMatrix.js | f 50 2 1 | l 35 Row.js | f 45 3 1
       c 52 > m 60 3 2 | l 32 number.js | n 110 2 1 0 3 2
      c 155
       r 142
        l 110 factoriesAny.js
        c 42
         g 75 11 core > f 1 2 1
         m 60 1 1
       r 60
        g 110 9 plain/number > f 1 6 2
        f 42 3 4
    c 188
     g 370 19 pinyin-match/es > l 1 main.js
     g 228 19 decimal.js > l 1 decimal.mjs
     g 180 19 vue-router/dist > l 1 vue-router.esm.js
     r 230
      c 92
       g 130 18 typed-function > l 1 typed-function.js
       g 88 15 complex.js > l 1 complex.js
      c 86
       g 80 14 seedrandom > f 1 5 1
       r 135
        c 62
         g 105 17 fraction.js > l 1 fraction.js
         l 22
        c 18 > m 1 1 1 | m 1 1 1
  r 365
   c 298
    b 201 55 3 4 #5b58d1 katex.9746ff5c.bundle.js > g 1 32 node_modules/katex/dist > l 520 katex.js @60 | l 6
    b 153 54 1 2 #93d35c components_table_tableList_List_vue-.20b90331.bundle.js > g 1 33 ..
     g 510 19 components/table
      g 132 12 cellRender > m 58 1 1 | m 34 1 2 | m 34 2 2
      g 90 12 utils > m 38 2 2 | f 45 2 4
      g 70 12 tableList > l 48 | f 20 1 3
      g 68 12 list > l 48 | f 18 2 4
      g 55 12 filters > f 1 3 4
      m 40 2 2 | m 20 1 3
     l 8
   c 126
    b 141 54 1 2 #d08b66 CourseClass.e1411676.bundle.js > g 1 32 src > g 1 20 pages/portal
     g 115 12 courseClass > f 70 3 1 | f 35 2 1
     g 72 12 images > f 1 2 1
    b 94 51 2 3 #85d8dc QuarkService.9a224b17.bundle.js > g 1 20 src/pages/portal
     g 186 8 > f 1 5 1
     l 10
    b 56 31 3 3 #cf9a6c > g 1 11 > l 180 | l 20
    b 40 23 5 3 #cf9a6c > l 1
   c 344
    r 44 > solo 56 #6593cf | s 52 #93da76 25 | s 45 #77a9d6 25 | s 45 #bfd970 25 | s 44 #d19c6d 25 | s 44 #9c68d6 25
    r 309
     c 47 > s 40 #8ad9cb 23 | s 40 #86d979 23 | s 38 #ad6bd8 22 | s 32 #cf9a6c 19 | s 32 #cf6dd6 19 | s 30 #9a69d4 18 | s 29 #d56a72 18
     c 286
      r 25 > s 48 #d269b4 16 | s 42 #d3ad70 16 | s 36 #83d9d0 16 | s 35 #83c1d7 16 | s 36 #83c1d9 16 | s 34 #85d8a8 16
      r 273
       c 26 > s 32 #6b80d6 18 | s 26 #87dada 16 | x 24 #cb6268 | x 17 #d1c068 | x 17 #cb6268 | x 16 #bfd569 | x 15 #6562d0 | x 10 #d6d66c | x 9 #d6d66c | x 8 #c45bd0
       foam 248
`;

const FOAM = '<svg width="111" height="110" viewBox="1187 570 212 330" preserveAspectRatio="none"><path fill="#dddee0" d="M1187 570h52l22 60-6 92-11 13-57 15zM1296 820l38-42 28 2 36 25v93h-104z"/><path fill="#8f95a5" d="M1243 570h74l-5 42-46 16z"/><path fill="#bdbfc4" d="M1324 570h34l2 38-18 47-16-10-8-33z"/><path fill="#d8d9db" d="M1362 570h36v32h-30z"/><path fill="#989dab" d="M1264 636l48-8 13 32-11 35-50-7z"/><path fill="#c2c4c9" d="M1366 614h32v56l-36 2-4-17z"/><path fill="#8b92a2" d="M1328 672l14-8 20 16 2 40-10 48h-24l-10-48z"/><path fill="#9097a6" d="M1372 686l26-4v113l-32-27z"/><path fill="#6e788b" d="M1246 735l16-33 52 4 12 62-32 47-48-55z"/><path fill="#44516d" d="M1187 755l51-7 14 30-12 42-53 2zM1242 835l18-45 28 40-4 68h-28z"/><path fill="#1f2c52" d="M1187 834h49l10 64h-59z"/></svg><p>FoamTree</p>';

const small = (w, a, d) => ({ kind: 'g', w, head: 7, label: '...', kids: [{ kind: 'f', w: 1, cols: a, rows: d, kids: [] }] });

function parseNode(text) {
  const [kind, w, ...a] = text.trim().split(/\s+/);
  const node = { kind, w: +w, kids: [] };
  if (kind === 'g' || kind === 'G') { node.head = +a[0]; node.label = a[1] || '...'; }
  else if (kind === 'b') { node.head = +a[0]; node.start = +a[1]; node.step = +a[2]; node.hue = a[3]; node.label = a[4] || '...'; }
  else if (kind === 'l') { node.label = a[0] || '...'; if (a[1]) node.fs = a[1].slice(1); }
  else if (kind === 'f') { node.cols = +a[0]; node.rows = +a[1]; }
  else if (kind === 'm') return small(+w, +a[0], +a[1]);
  else if (kind === 'n') {
    const [rows, cols, grow, x, y] = a.map(Number);
    node.kind = 'c';
    for (let i = 0; i < rows; i++) {
      const line = { kind: 'r', w: 1.3 - 0.6 * i / rows, kids: [] };
      for (let j = 0; j < cols + Math.round(i * grow); j++) line.kids.push(small(1.3 - 0.5 * j / cols, x + (i + j) % 2, y));
      node.kids.push(line);
    }
  }
  else if (kind === 's') return { kind: 'b', w: +w, hue: a[0], head: +a[1], start: 3, step: 3, label: '...', kids: [{ kind: 'l', w: 1, label: ' ', kids: [] }] };
  else if (kind === 'x' || kind === 'solo') node.hue = a[0];
  return node;
}

function parse(outline) {
  const top = { kids: [] };
  const stack = [top];
  outline.split('\n').filter(t => t.trim()).forEach(line => {
    const level = line.search(/\S/);
    let parent = stack[level];
    line.trim().split(' > ').forEach(part => {
      const nodes = part.split(' | ').map(parseNode);
      parent.kids.push(...nodes);
      parent = nodes[nodes.length - 1];
    });
    stack[level + 1] = parent;
    stack.length = level + 2;
  });
  return top.kids[0];
}

function make(cls, grow) {
  const el = document.createElement('div');
  el.className = cls;
  el.style.flexGrow = grow;
  return el;
}

function draw(node, depth, start, step) {
  const { kind, w } = node;
  if (kind === 'foam') { const el = make('foam', w); el.innerHTML = FOAM; return el; }
  if (kind === 'l' || kind === 'x' || kind === 'solo') {
    const el = make('leaf' + (node.hue ? ' bundle' + (kind === 'x' ? ' tiny' : '') : ''), w);
    el.dataset.label = kind === 'x' ? '' : (node.label || '...').trim();
    if (node.fs) el.dataset.fs = node.fs;
    if (kind === 'solo') el.dataset.fs = 20;
    if (node.hue) el.style.setProperty('--hue', node.hue);
    return el;
  }
  if (kind === 'f') {
    const el = make('row field', w);
    for (let i = 0; i < node.cols; i++) {
      const col = make('col', (1.6 - i / node.cols).toFixed(2));
      const count = node.rows + (node.cols > 2 ? Math.floor(i * 0.6) : 0);
      for (let j = 0; j < count; j++) col.append(make('leaf tiny' + ((i * 3 + j * 2) % 5 < 2 ? ' alt' : ''), (1.5 - 0.8 * j / count).toFixed(2)));
      el.append(col);
    }
    return el;
  }
  if (kind === 'r' || kind === 'c') {
    const el = make(kind === 'r' ? 'row' : 'col', w);
    node.kids.forEach(k => el.append(draw(k, depth, start, step)));
    return el;
  }
  if (kind === 'b') { depth = 0; start = node.start; step = node.step; }
  const el = make('cell s' + Math.min(10, start + depth * step), w);
  if (kind === 'b') {
    el.classList.add('bundle');
    el.style.setProperty('--hue', node.hue);
    if (node.label.startsWith('katex')) el.classList.add('light');
  }
  const head = make('head' + (node.head < 9 ? ' faint' : ''), 0);
  head.style.height = node.head + 'px';
  head.dataset.head = node.head;
  head.dataset.label = node.label;
  const body = make('body ' + (kind === 'G' ? 'col' : 'row') + ' k' + Math.min(4, depth), 1);
  node.kids.forEach(k => body.append(draw(k, depth + 1, start, step)));
  el.append(head, body);
  return el;
}

const root = document.getElementById('treemap');
const tree = draw(parse(OUTLINE), 0, 0, 0);
tree.classList.add('plot');
root.append(tree);

// fit every label to its box
const SPACING = 0.022;
const pen = document.createElement('canvas').getContext('2d');
pen.font = '100px Inter';
const jobs = [];
root.querySelectorAll('.leaf, .head').forEach(el => {
  const w = el.clientWidth, h = el.clientHeight;
  let text = el.dataset.label;
  if (text === undefined) text = w > 13 && h > 9 ? '...' : '';
  if (!text || w < 7) return;
  const dots = /^\.+$/.test(text);
  const em = pen.measureText(text).width / 100 - SPACING * text.length;
  let fs;
  if (el.dataset.head) fs = dots ? Math.min(h * 0.75, 32, w * 0.3) : Math.min(h * 0.55, w * 0.92 / em);
  else if (el.dataset.fs) fs = +el.dataset.fs;
  else fs = dots ? Math.min(w * 0.25, h * 0.3) : Math.min(w * 0.8 / em, h * 0.62);
  jobs.push([el, text, fs, dots]);
});
jobs.forEach(([el, text, fs, dots]) => {
  const span = document.createElement('span');
  el.style.fontSize = fs.toFixed(1) + 'px';
  el.style.letterSpacing = dots ? '0' : -(SPACING * fs).toFixed(2) + 'px';
  span.textContent = text;
  el.append(span);
  if (dots && fs < 8) el.classList.add('faint');
});

const folder = '<svg width="23" height="18" viewBox="0 0 23 18"><path d="M3 1.200h6l2.500 3H20q1.800 0 1.800 1.800v9q0 1.800-1.800 1.800H3q-1.800 0-1.800-1.800V3Q1.200 1.200 3 1.200z" fill="none" stroke="#555" stroke-width="2.200"/></svg>';
document.getElementById('bookmarks').innerHTML = ['开发资源', '日常收集', '资料收集', '学习积累', '常用工具', 'yach', '本地开发', '开发所需'].map(t => `<div>${folder}${t}</div>`).join('');
```
